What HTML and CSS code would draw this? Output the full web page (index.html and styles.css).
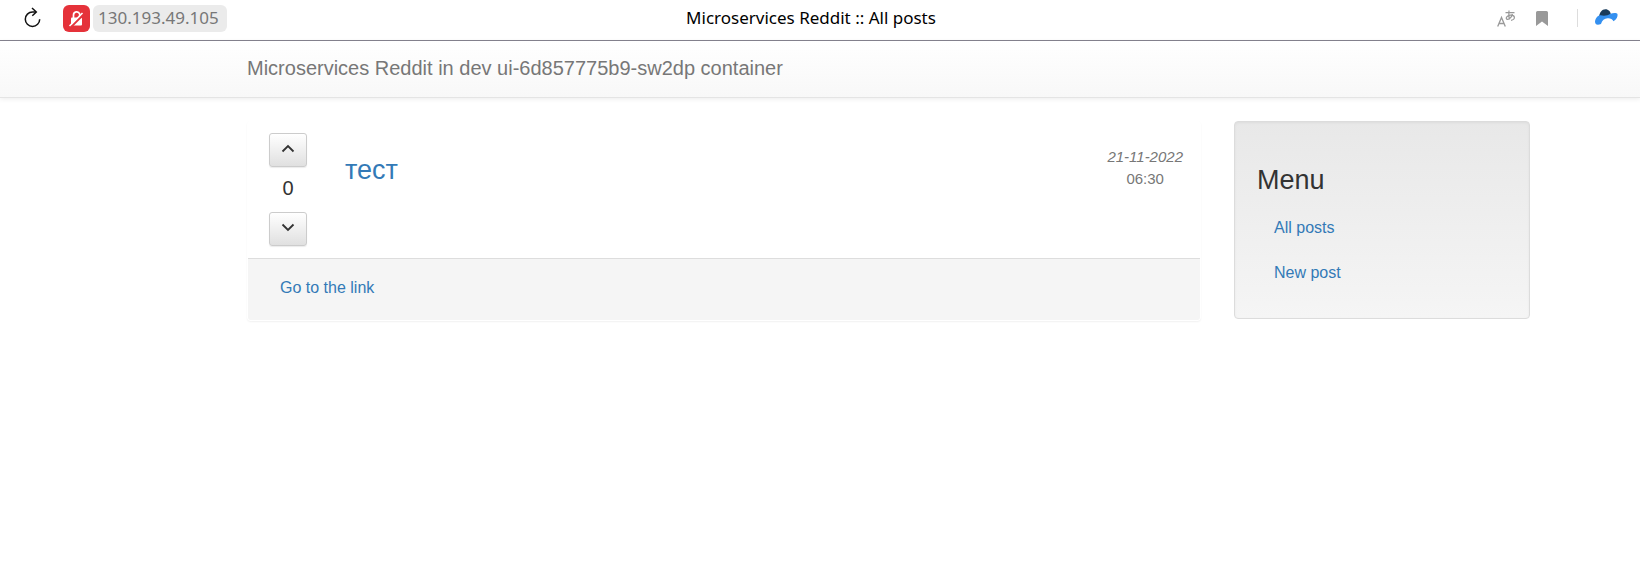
FILE: index.html
```html
<!DOCTYPE html>
<html lang="en">
<head>
<meta charset="utf-8">
<meta name="viewport" content="width=device-width, initial-scale=1">
<title>Microservices Reddit :: All posts</title>
<link rel="stylesheet" href="styles.css">
</head>
<body>
<div class="toolbar">
  <div class="toolbar-left">
    <button class="icon-button" type="button" aria-label="Reload">
      <svg width="18" height="22" viewBox="0 0 18 22" fill="none" stroke="#111" stroke-width="1.5"><path d="M15.700 12.200A7.200 7.200 0 1 1 8.500 5H12"/><path d="M8 1L12.300 5L8.300 8.800"/></svg>
    </button>
    <button class="security" type="button" aria-label="Connection is not secure">
      <svg width="19" height="19" viewBox="0 0 19 19" fill="none"><path d="M6.500 9V6a3.200 3.200 0 0 1 6.200-1V9" stroke="#fff" stroke-width="1.700"/><rect x="4" y="8.500" width="11" height="8" rx="1" fill="#fff"/><path d="M3.500 18.500L17 5" stroke="#e5323a" stroke-width="2"/><path d="M2.500 17L15.500 4" stroke="#fff" stroke-width="1.600"/></svg>
    </button>
    <button class="address" type="button">130.193.49.105</button>
  </div>
  <div class="page-title">Microservices Reddit :: All posts</div>
  <div class="toolbar-right">
    <button class="icon-button" type="button" aria-label="Translate">
      <svg width="19" height="18" viewBox="0 0 19 18" fill="none" stroke="#999"><path d="M.7 17.500L4.500 8.500L8.300 17.500M2 14.500H7" stroke-width="1.300"/><path d="M8.500 3.700H17.500M12 1.500C11.600 5 11.700 8 12.500 10.500M15.500 5C14.500 8.500 12 10.700 10.200 10.300C8.200 9.800 9.500 6.500 13.500 6.200C18.500 5.900 18.700 10.500 14 11.300" stroke-width="1.200"/></svg>
    </button>
    <button class="icon-button bookmark" type="button" aria-label="Bookmark">
      <svg width="12" height="15" viewBox="0 0 12 15"><path d="M1.500 0H10.500Q12 0 12 1.500V15L6 10.500L0 15V1.500Q0 0 1.500 0Z" fill="#999"/></svg>
    </button>
    <span class="divider"></span>
    <button class="icon-button" type="button" aria-label="Hat extension">
      <svg width="23" height="19" viewBox="0 0 23 19"><path d="M4 8C4.500 3.500 7 .2 10.500 .3C13.500 .3 15.500 2.500 16 6L13 8L6 9Z" fill="#193b5b"/><path d="M0 12.500C.5 9 3 6.300 5.500 6.300C9 7 13 6.700 15.500 4.800C18 3.800 21.500 3.500 22.500 5C23 7.500 21.500 10.500 18.500 12.300C17.500 10 15 9 12.500 9.300C9.500 9.500 7 11.500 6 15C3.500 16 1.500 15.800 .8 15C.2 14.300 0 13.500 0 12.500Z" fill="#3490f0"/></svg>
    </button>
  </div>
</div>

<nav class="navbar">
  <a class="brand" href="#">Microservices Reddit in dev ui-6d857775b9-sw2dp container</a>
</nav>

<div class="container">
  <main class="main">
    <article class="panel">
      <div class="panel-body">
        <div class="votes">
          <button class="vote" type="button" aria-label="Vote up"><svg width="14" height="9" viewBox="0 0 14 9"><path d="M1.500 7.500L7 2L12.500 7.500" fill="none" stroke="#333" stroke-width="1.800"/></svg></button>
          <span class="score">0</span>
          <button class="vote" type="button" aria-label="Vote down"><svg width="14" height="9" viewBox="0 0 14 9"><path d="M1.500 1.500L7 7L12.500 1.500" fill="none" stroke="#333" stroke-width="1.800"/></svg></button>
        </div>
        <h3 class="post-title"><a href="#">тест</a></h3>
        <div class="date"><em>21-11-2022</em><span>06:30</span></div>
      </div>
      <div class="panel-footer"><a href="#">Go to the link</a></div>
    </article>
  </main>
  <aside class="well">
    <h3 class="menu-title">Menu</h3>
    <nav class="menu">
      <a href="#">All posts</a>
      <a href="#">New post</a>
    </nav>
  </aside>
</div>
</body>
</html>
```

FILE: styles.css
```css
* { box-sizing: border-box; }

body {
  margin: 0;
  background: #fff;
  color: #333;
  font: 16px/22px "Liberation Sans", Arial, sans-serif;
}

a { color: #337ab7; text-decoration: none; }
a:hover { text-decoration: underline; }

button { padding: 0; border: 0; background: none; font: inherit; cursor: pointer; }
svg { display: block; }

.toolbar {
  display: grid;
  grid-template-columns: 1fr auto 1fr;
  align-items: center;
  height: 41px;
  padding: 0 22px 4px 24px;
  border-bottom: 1px solid #85838f;
  font: 17px/26px "Noto Sans", sans-serif;
}

.toolbar-left, .toolbar-right { display: flex; align-items: center; }
.toolbar-right { justify-content: flex-end; }

.security {
  display: grid;
  place-items: center;
  width: 27px;
  height: 27px;
  margin-left: 21px;
  border-radius: 6px;
  background: #e5323a;
}

.address {
  height: 27px;
  margin-left: 3px;
  padding: 0 8px 0 5px;
  border-radius: 6px;
  background: #ebebeb;
  color: #777;
}

.page-title { margin-right: 20px; color: #000; }
.bookmark { margin-left: 20px; }
.divider { width: 1px; height: 18px; margin: 0 17px 0 29px; background: #ddd; }

.navbar {
  padding: 16px 110px 18px 247px;
  border-bottom: 1px solid #e4e4e4;
  background: linear-gradient(#fff, #f8f8f8);
  box-shadow: 0 1px 5px rgba(0, 0, 0, .08);
}

.brand { display: block; color: #777; font-size: 20px; }

.container {
  display: grid;
  grid-template-columns: minmax(0, 1fr) 296px;
  gap: 33px;
  align-items: start;
  padding: 23px 110px 24px 247px;
}

.panel {
  border: 1px solid transparent;
  border-radius: 4px;
  box-shadow: 0 1px 2px rgba(0, 0, 0, .06);
}

.panel-body {
  display: flex;
  align-items: flex-start;
  padding: 11px 17px 12px 21px;
}

.votes { display: flex; flex-direction: column; align-items: center; }

.vote {
  display: grid;
  place-items: center;
  width: 38px;
  height: 34px;
  padding-bottom: 4px;
  border: 1px solid #ccc;
  border-radius: 3px;
  background: linear-gradient(#fff, #e0e0e0);
  box-shadow: 0 1px 1px rgba(0, 0, 0, .08);
}

.score { padding: 10px 0 13px; font-size: 20px; }

.post-title, .menu-title { margin: 0; font-size: 27px; line-height: 28px; font-weight: 400; }
.post-title { padding: 23px 0 0 38px; }

.date {
  display: flex;
  flex-direction: column;
  align-items: center;
  margin-left: auto;
  padding-top: 13px;
  color: #777;
  font-size: 15px;
}

.panel-footer {
  padding: 18px 32px 21px;
  border-top: 1px solid #ddd;
  border-radius: 0 0 3px 3px;
  background: #f5f5f5;
}

.well {
  padding: 44px 22px 22px;
  border: 1px solid #dcdcdc;
  border-radius: 4px;
  background: linear-gradient(#e8e8e8, #f5f5f5);
  box-shadow: inset 0 1px 3px rgba(0, 0, 0, .05), 0 1px 0 rgba(255, 255, 255, .1);
}

.menu { display: flex; flex-direction: column; padding-top: 12px; }
.menu a { padding: 11px 17px 12px; }
```
